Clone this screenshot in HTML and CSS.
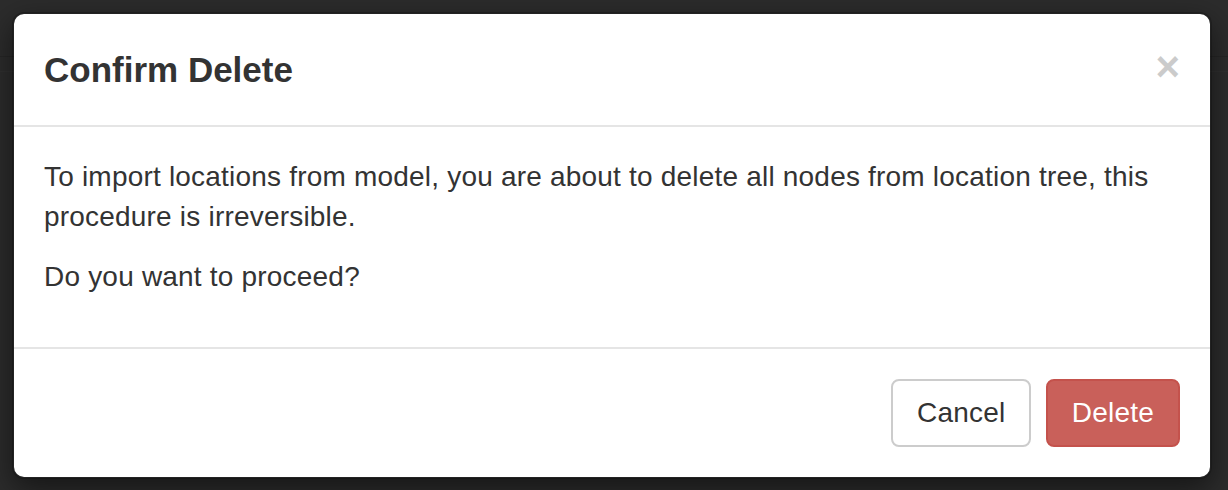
FILE: index.html
```html
<!DOCTYPE html>
<html lang="en">
<head>
<meta charset="utf-8">
<title>Confirm Delete</title>
<link rel="stylesheet" href="styles.css">
</head>
<body>
<div class="backdrop">
  <div class="page-lines">
    <div class="line-top"></div>
  </div>
  <div class="modal-dialog">
    <div class="modal-content">
      <div class="modal-header">
        <button type="button" class="close" aria-label="Close">&times;</button>
        <h4 class="modal-title">Confirm Delete</h4>
      </div>
      <div class="modal-body">
        <p>To import locations from model, you are about to delete all nodes from location tree, this procedure is irreversible.</p>
        <p>Do you want to proceed?</p>
      </div>
      <div class="modal-footer">
        <button type="button" class="btn btn-default">Cancel</button>
        <button type="button" class="btn btn-danger">Delete</button>
      </div>
    </div>
  </div>
</div>
</body>
</html>
```
FILE: styles.css
```css
* { box-sizing: border-box; }
html, body {
  margin: 0;
  padding: 0;
  width: 1228px;
  height: 490px;
  overflow: hidden;
  background: #2c2c2c;
  font-family: "Helvetica Neue", "Liberation Sans", Arial, sans-serif;
  color: #333;
}
.backdrop {
  position: relative;
  width: 1228px;
  height: 490px;
  padding: 12px 0 0 12px;
  background: #2c2c2c;
}
.page-lines {
  position: absolute;
  left: 0;
  top: 0;
  width: 1228px;
  height: 490px;
}
.line-top {
  position: absolute;
  left: 0;
  top: 56px;
  width: 1228px;
  height: 16px;
  border-top: 1px solid #262626;
  border-bottom: 1px solid #303030;
}
.modal-dialog {
  position: relative;
  width: 1200px;
}
.modal-content {
  background: #fff;
  border: 2px solid rgba(0, 0, 0, 0.2);
  border-radius: 12px;
  background-clip: padding-box;
  box-shadow: 0 10px 30px rgba(0, 0, 0, 0.5);
}
.modal-header {
  padding: 30px;
  border-bottom: 2px solid #e5e5e5;
}
.modal-header::after { content: ""; display: block; clear: both; }
.modal-title {
  margin: 0;
  font-size: 35px;
  font-weight: bold;
  line-height: 51.4px;
  color: #333;
}
.close {
  float: right;
  margin-top: 2px;
  padding: 0;
  border: 0;
  background: transparent;
  font-family: "Liberation Sans", Arial, sans-serif;
  font-size: 42px;
  font-weight: bold;
  line-height: 1;
  color: #000;
  opacity: 0.2;
  text-shadow: 0 2px 0 #fff;
  cursor: pointer;
}
.modal-body {
  padding: 30px;
  font-size: 28px;
  line-height: 40px;
  letter-spacing: 0.2px;
}
.modal-body p { margin: 0 0 20px; }
.modal-footer {
  padding: 30px;
  text-align: right;
  border-top: 2px solid #e5e5e5;
}
.btn {
  display: inline-block;
  margin: 0;
  padding: 12px 24px;
  font-family: "Helvetica Neue", "Liberation Sans", Arial, sans-serif;
  font-size: 28px;
  line-height: 40px;
  letter-spacing: 0.2px;
  border: 2px solid transparent;
  border-radius: 8px;
  vertical-align: middle;
  cursor: pointer;
}
.btn + .btn { margin-left: 10px; }
.btn-default {
  color: #333;
  background: #fff;
  border-color: #ccc;
}
.btn-danger {
  color: #fff;
  background: #c9605a;
  border-color: #c4524c;
}
```
